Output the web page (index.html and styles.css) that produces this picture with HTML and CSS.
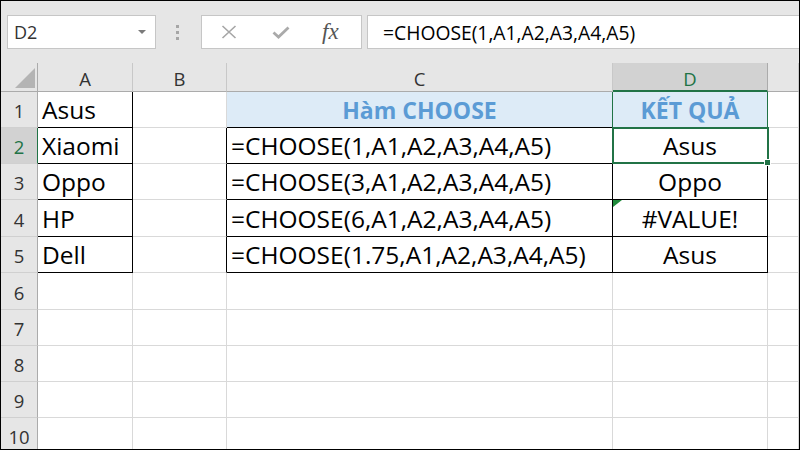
FILE: index.html
```html
<!DOCTYPE html>
<html lang="vi">
<head>
<meta charset="utf-8">
<title>CHOOSE</title>
<link rel="stylesheet" href="styles.css">
</head>
<body>
<div class="frame">
  <div class="toolbar">
    <div class="namebox"><span>D2</span><span class="caret"></span></div>
    <div class="grip"><i></i><i></i><i></i></div>
    <div class="fxbtns">
      <svg class="ico-x" width="16" height="14" viewBox="0 0 16 14"><path d="M1.5 1 L14.5 13 M14.5 1 L1.5 13" stroke="#a6a6a6" stroke-width="1.6" fill="none"/></svg>
      <svg class="ico-ok" width="18" height="13" viewBox="0 0 18 13"><path d="M1.5 6.5 L6.5 11 L16.5 1.5" stroke="#aaaaaa" stroke-width="2.8" fill="none"/></svg>
      <span class="fx">fx</span>
    </div>
    <div class="formula">=CHOOSE(1,A1,A2,A3,A4,A5)</div>
  </div>
  <div class="sheet">
    <div class="c corner"><span class="tri"></span></div>
    <div class="c colh">A</div>
    <div class="c colh">B</div>
    <div class="c colh">C</div>
    <div class="c colh active">D</div>
    <div class="c colh"></div>

    <div class="c rowh">1</div>
    <div class="c txt br bb">Asus</div>
    <div class="c"></div>
    <div class="c hd bb gr">Hàm CHOOSE</div>
    <div class="c hd bb gr">KẾT QUẢ</div>
    <div class="c"></div>

    <div class="c rowh active">2</div>
    <div class="c txt br bb">Xiaomi</div>
    <div class="c br"></div>
    <div class="c txt br bb">=CHOOSE(1,A1,A2,A3,A4,A5)</div>
    <div class="c txt ctr br bb cur">Asus<span class="sel"><span class="handle"></span></span></div>
    <div class="c"></div>

    <div class="c rowh">3</div>
    <div class="c txt br bb">Oppo</div>
    <div class="c br"></div>
    <div class="c txt br bb">=CHOOSE(3,A1,A2,A3,A4,A5)</div>
    <div class="c txt ctr br bb">Oppo</div>
    <div class="c"></div>

    <div class="c rowh">4</div>
    <div class="c txt br bb">HP</div>
    <div class="c br"></div>
    <div class="c txt br bb">=CHOOSE(6,A1,A2,A3,A4,A5)</div>
    <div class="c txt ctr br bb cur"><span class="err"></span>#VALUE!</div>
    <div class="c"></div>

    <div class="c rowh">5</div>
    <div class="c txt br bb">Dell</div>
    <div class="c br"></div>
    <div class="c txt br bb">=CHOOSE(1.75,A1,A2,A3,A4,A5)</div>
    <div class="c txt ctr br bb">Asus</div>
    <div class="c"></div>

    <div class="c rowh">6</div><div class="c"></div><div class="c"></div><div class="c"></div><div class="c"></div><div class="c"></div>
    <div class="c rowh">7</div><div class="c"></div><div class="c"></div><div class="c"></div><div class="c"></div><div class="c"></div>
    <div class="c rowh">8</div><div class="c"></div><div class="c"></div><div class="c"></div><div class="c"></div><div class="c"></div>
    <div class="c rowh">9</div><div class="c"></div><div class="c"></div><div class="c"></div><div class="c"></div><div class="c"></div>
    <div class="c rowh">10</div><div class="c"></div><div class="c"></div><div class="c"></div><div class="c"></div><div class="c"></div>
  </div>
</div>
</body>
</html>
```

FILE: styles.css
```css
html, body {
  margin: 0;
  padding: 0;
  background: #fff;
}

.frame {
  width: 800px;
  height: 450px;
  box-sizing: border-box;
  border: 1px solid #000;
  overflow: hidden;
  background: #fff;
  font-family: "Open Sans", "Noto Sans", sans-serif;
}

/* formula bar */
.toolbar {
  height: 62px;
  background: #e6e6e6;
  display: flex;
  align-items: center;
  padding-left: 6px;
}

.namebox {
  width: 149px;
  height: 34px;
  box-sizing: border-box;
  border: 1px solid #c6c6c6;
  background: #fff;
  display: flex;
  align-items: center;
  justify-content: space-between;
  padding: 0 9px 0 6px;
  font-size: 18px;
  color: #333;
}

.caret {
  width: 0;
  height: 0;
  border-left: 4px solid transparent;
  border-right: 4px solid transparent;
  border-top: 4px solid #7a7a7a;
}

.grip {
  margin-left: 20px;
  display: flex;
  flex-direction: column;
  gap: 3px;
}

.grip i {
  display: block;
  width: 3px;
  height: 3px;
  background: #a6a6a6;
}

.fxbtns {
  margin-left: 22px;
  width: 161px;
  height: 34px;
  box-sizing: border-box;
  border: 1px solid #c6c6c6;
  background: #fff;
  display: flex;
  align-items: center;
}

.ico-x {
  margin-left: 19px;
}

.ico-ok {
  margin-left: 35px;
}

.fx {
  margin-left: 32px;
  font-family: "Liberation Serif", serif;
  font-style: italic;
  font-size: 23px;
  color: #555;
  line-height: 1;
  margin-top: -2px;
}

.formula {
  flex: 1;
  margin-left: 5px;
  height: 34px;
  box-sizing: border-box;
  border: 1px solid #c6c6c6;
  border-right: none;
  background: #fff;
  display: flex;
  align-items: center;
  padding-left: 15px;
  font-size: 19.3px;
  color: #000;
}

/* sheet grid */
.sheet {
  display: grid;
  grid-template-columns: 37px 95px 94px 386px 155px 1fr;
  grid-template-rows: 29px 36px 36px 36px 37px 36px 37px 36px 36px 36px 36px;
}

.c {
  box-sizing: border-box;
  border-right: 1px solid #d9d9d9;
  border-bottom: 1px solid #d9d9d9;
  display: flex;
  align-items: center;
  white-space: nowrap;
  position: relative;
  min-width: 0;
}

.corner {
  background: #e6e6e6;
  border-right-color: #ababab;
  border-bottom-color: #ababab;
}

.tri {
  position: absolute;
  right: 2px;
  bottom: 3px;
  width: 0;
  height: 0;
  border-left: 20px solid transparent;
  border-bottom: 20px solid #b4b4b4;
}

.colh {
  background: #e6e6e6;
  border-right-color: #c8c8c8;
  border-bottom-color: #ababab;
  justify-content: center;
  font-size: 18.5px;
  color: #333;
  padding-top: 3px;
}

.colh.active {
  background: #d2d2d2;
  color: #217346;
  border-right-color: #ababab;
  border-bottom: 2px solid #217346;
}

.rowh {
  background: #e6e6e6;
  border-right-color: #ababab;
  border-bottom-color: #d0d0d0;
  justify-content: center;
  font-size: 18.5px;
  color: #333;
  padding-top: 2px;
}

.rowh.active {
  background: #d2d2d2;
  color: #217346;
  border-right-color: #217346;
}

.txt {
  font-size: 24.5px;
  color: #000;
  padding-left: 4px;
}

.ctr {
  justify-content: center;
  padding-left: 0;
}

.br {
  border-right-color: #000;
}

.bb {
  border-bottom-color: #000;
}

.gr {
  border-right-color: #217346;
}

.hd {
  background: #ddebf7;
  justify-content: center;
  font-size: 23px;
  font-weight: 700;
  color: #5b9bd5;
}

.cur {
  overflow: visible;
}

.sel {
  position: absolute;
  left: -1px;
  top: -1px;
  right: -2px;
  bottom: -1px;
  border: 2px solid #217346;
  z-index: 2;
}

.handle {
  position: absolute;
  right: -4px;
  bottom: -4px;
  width: 5px;
  height: 5px;
  background: #217346;
  border: 1px solid #fff;
}

.err {
  position: absolute;
  left: 0;
  top: 0;
  width: 0;
  height: 0;
  border-top: 7px solid #1f8a3b;
  border-right: 9px solid transparent;
}
```
